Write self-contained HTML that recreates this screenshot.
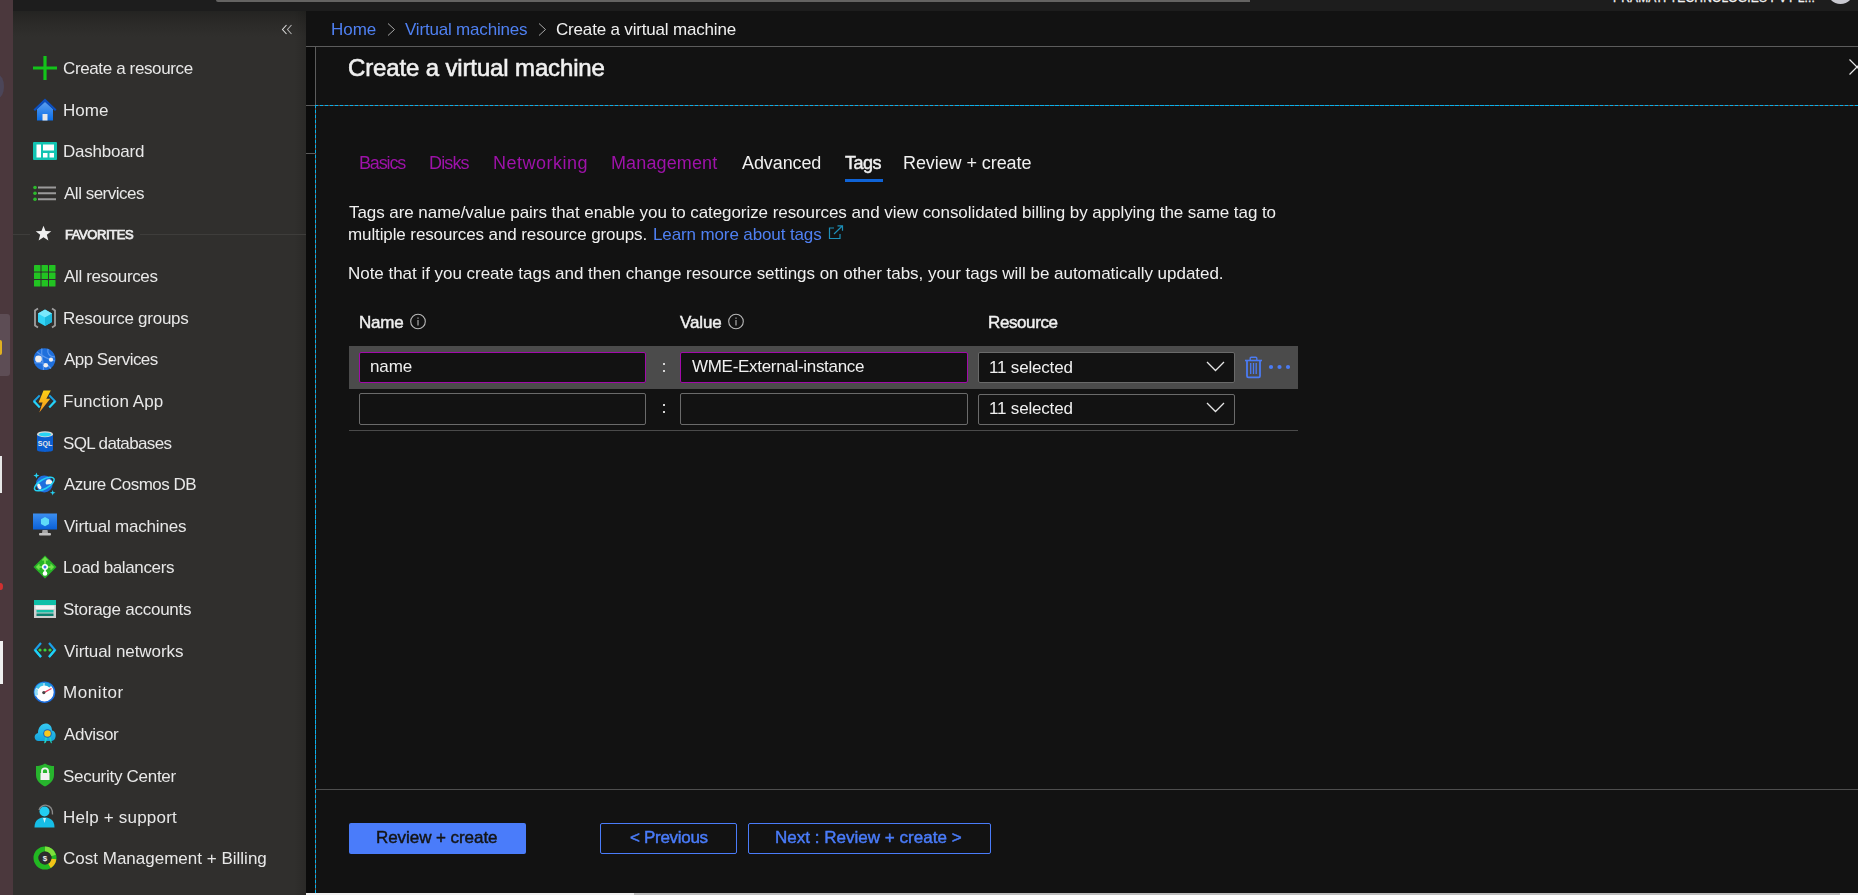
<!DOCTYPE html>
<html><head><meta charset="utf-8"><style>
*{margin:0;padding:0;box-sizing:border-box}
html,body{width:1858px;height:895px;overflow:hidden;background:#121212;font-family:"Liberation Sans", sans-serif;-webkit-font-smoothing:antialiased}
.t,.si,.fav{will-change:transform}
.a{position:absolute}
svg{display:block}
.strip{position:absolute;left:0;top:0;width:13px;height:895px;background:#4b383d}
.topbar{position:absolute;left:13px;top:0;width:1845px;height:11px;background:#1d1d1d}
.sidebar{position:absolute;left:13px;top:11px;width:293px;height:884px;background:linear-gradient(180deg,#242422 0px,#2b2a28 12px,#302f2d 26px)}
.sbshadow{position:absolute;left:294px;top:11px;width:12px;height:884px;background:linear-gradient(90deg,rgba(0,0,0,0),rgba(0,0,0,0.12))}
.ic{position:absolute;left:33px;width:24px;height:24px}
.ic svg{display:block}
.si{position:absolute;left:64px;font-size:17px;line-height:21px;color:#e8e8e8;white-space:nowrap;letter-spacing:-0.35px}
.fav{position:absolute;left:65px;font-size:13px;line-height:15px;font-weight:400;color:#ececec;letter-spacing:-0.42px;-webkit-text-stroke:0.75px #ececec}
.fav-line{position:absolute;left:13px;width:293px;height:1px;background:#3e3d3b}
.t{position:absolute;white-space:nowrap;font-size:17px;line-height:21px;color:#f0f0f0}
.lnk{color:#4f80f2}
.purple{color:#9e12a9}
.tab{top:152px;font-size:18px;line-height:22px}
.semi{-webkit-text-stroke:0.45px #f0f0f0}
</style></head><body>
<div class="strip"></div>
<div class="a" style="left:-8px;top:75px;width:12px;height:23px;border-radius:50%;background:#4b4558;filter:blur(0.6px)"></div>
<div class="a" style="left:-4px;top:314px;width:14px;height:62px;border-radius:3px;background:#5d4d55"></div>
<div class="a" style="left:-3px;top:340px;width:5px;height:15px;border-radius:2px;background:#e0b020"></div>
<div class="a" style="left:0;top:456px;width:2px;height:37px;background:#e8e8e8"></div>
<div class="a" style="left:-2px;top:583px;width:5px;height:7px;border-radius:50%;background:#d03030"></div>
<div class="a" style="left:0;top:641px;width:3px;height:43px;background:#f0f0f0"></div>
<div class="topbar"></div>
<div class="a" style="left:216px;top:0;width:1034px;height:2px;background:#646362;border-bottom-left-radius:2px"></div>
<div class="a" style="left:1613px;top:-9px;font-size:12px;line-height:15px;color:#f0f0f0;letter-spacing:0.16px;-webkit-text-stroke:0.3px #f0f0f0;white-space:nowrap">PRAMATI TECHNOLOGIES PVT L...</div>
<div class="a" style="left:1827px;top:-23.5px;width:27px;height:27px;border-radius:50%;background:#c9c9d0"></div>
<div class="sidebar"></div>
<div class="sbshadow"></div>
<div class="ic" style="top:56.0px"><svg width="24" height="24" viewBox="0 0 24 24"><path d="M12 0v24M0 12h24" stroke="#13c41a" stroke-width="3.2"/></svg></div><div class="si" style="top:58px;left:63.3px;letter-spacing:-0.369px">Create a resource</div><div class="ic" style="top:97.6px"><svg width="24" height="24" viewBox="0 0 24 24"><defs><linearGradient id="hg" x1="0" y1="0" x2="0" y2="1"><stop offset="0" stop-color="#5ea0ef"/><stop offset="1" stop-color="#0a6ee8"/></linearGradient></defs>
<path d="M4 11 L12 3.5 L20 11 V22.5 H4Z" fill="url(#hg)"/><path d="M0.5 11.5 L12 0.5 L23.5 11.5 L22 13 L12 4 L2 13Z" fill="#0c4fbf"/><rect x="9.5" y="16" width="5" height="6.5" fill="#e8e8e8"/></svg></div><div class="si" style="top:100px;left:63.3px;letter-spacing:0.067px">Home</div><div class="ic" style="top:139.2px"><svg width="24" height="24" viewBox="0 0 24 24"><rect x="0" y="3" width="24" height="18" rx="1" fill="#12c4b2"/><rect x="3.5" y="5.5" width="4.5" height="13" fill="#fff"/><rect x="10" y="5.5" width="11" height="6" fill="#fff"/><rect x="10" y="14" width="4.5" height="4.5" fill="#fff"/><rect x="16.5" y="14" width="4.5" height="4.5" fill="#fff"/></svg></div><div class="si" style="top:141px;left:63.3px;letter-spacing:-0.225px">Dashboard</div><div class="ic" style="top:180.7px"><svg width="24" height="24" viewBox="0 0 24 24"><g fill="#2dba2d"><circle cx="2" cy="6.5" r="1.8"/><circle cx="2" cy="12.3" r="1.8"/><circle cx="2" cy="18.2" r="1.8"/></g><g stroke="#9a9a9a" stroke-width="2"><path d="M5 6.5h18M5 12.3h18M5 18.2h18"/></g></svg></div><div class="si" style="top:183px;left:64.3px;letter-spacing:-0.491px">All services</div><div class="fav-line" style="top:234px;left:13px;width:17px"></div><div class="fav-line" style="top:234px;left:140px;width:166px"></div><div style="position:absolute;left:35px;top:225px;width:17px;height:17px"><svg width="17" height="17" viewBox="0 0 24 24"><path d="M12 1 L14.9 8.6 L23 8.9 L16.7 13.9 L18.9 21.8 L12 17.3 L5.1 21.8 L7.3 13.9 L1 8.9 L9.1 8.6Z" fill="#f0f0f0"/></svg></div><div class="fav" style="top:227px;left:64.6px">FAVORITES</div><div class="ic" style="top:263.9px"><svg width="24" height="24" viewBox="0 0 24 24"><g fill="#22c322"><rect x="1.0" y="1.0" width="6.5" height="6.5" rx="0.6"/><rect x="8.5" y="1.0" width="6.5" height="6.5" rx="0.6"/><rect x="16.0" y="1.0" width="6.5" height="6.5" rx="0.6"/><rect x="1.0" y="8.5" width="6.5" height="6.5" rx="0.6"/><rect x="8.5" y="8.5" width="6.5" height="6.5" rx="0.6"/><rect x="16.0" y="8.5" width="6.5" height="6.5" rx="0.6"/><rect x="1.0" y="16.0" width="6.5" height="6.5" rx="0.6"/><rect x="8.5" y="16.0" width="6.5" height="6.5" rx="0.6"/><rect x="16.0" y="16.0" width="6.5" height="6.5" rx="0.6"/></g></svg></div><div class="si" style="top:266px;left:64.3px;letter-spacing:-0.358px">All resources</div><div class="ic" style="top:305.5px"><svg width="24" height="24" viewBox="0 0 24 24"><path d="M5 2.5 L2 4.5 V19.5 L5 21.5" fill="none" stroke="#a0a0a0" stroke-width="1.8"/><path d="M19 2.5 L22 4.5 V19.5 L19 21.5" fill="none" stroke="#a0a0a0" stroke-width="1.8"/>
<path d="M12 3.5 L19 7.5 V16 L12 20 L5 16 V7.5Z" fill="#32d4f5"/><path d="M12 3.5 L19 7.5 L12 11.5 L5 7.5Z" fill="#7ae8fb"/><path d="M12 11.5 L19 7.5 V16 L12 20Z" fill="#1cb8dc"/></svg></div><div class="si" style="top:308px;left:63.3px;letter-spacing:-0.264px">Resource groups</div><div class="ic" style="top:347.1px"><svg width="24" height="24" viewBox="0 0 24 24"><circle cx="11.5" cy="12.2" r="10.9" fill="#1e6fdc"/><path d="M4 5 C9 9 14 12 22 14 M9 1.5 C7.5 8 11 16 10.5 23 M1.5 16 C8 15 14 17 18 21.5 M15 1.8 C14 6 16 10 22 10" stroke="#5a98ee" stroke-width="1.2" fill="none"/><circle cx="5.5" cy="11.9" r="3.4" fill="#f0f0f0"/><circle cx="18" cy="12.7" r="2.1" fill="#f0f0f0"/><circle cx="12.8" cy="18.3" r="2.3" fill="#f0f0f0"/></svg></div><div class="si" style="top:349px;left:64.3px;letter-spacing:-0.536px">App Services</div><div class="ic" style="top:388.6px"><svg width="24" height="24" viewBox="0 0 24 24"><defs><linearGradient id="fg" x1="0" y1="0" x2="0" y2="1"><stop offset="0" stop-color="#fcd116"/><stop offset="1" stop-color="#f7941d"/></linearGradient></defs><path d="M6.7 6.4 L0.9 12.2 L6.7 18.4" fill="none" stroke="#1ba1e2" stroke-width="2"/><path d="M16.3 6.4 L22.1 12.2 L16.3 18.4" fill="none" stroke="#1ba1e2" stroke-width="2"/><path d="M0.9 12.2 L6.7 18.4 M22.1 12.2 L16.3 18.4" stroke="#27d4f5" stroke-width="2"/><path d="M10.5 1.5 L17.8 1.5 L13.3 9.8 L17.2 9.8 L6.3 23.5 L9.6 13.6 L5.6 13.6 Z" fill="url(#fg)"/></svg></div><div class="si" style="top:391px;left:63.3px;letter-spacing:0.091px">Function App</div><div class="ic" style="top:430.2px"><svg width="24" height="24" viewBox="0 0 24 24"><path d="M4 4 V20 C4 22.5 20 22.5 20 20 V4Z" fill="#0b5ed0"/><ellipse cx="12" cy="4.2" rx="8" ry="3" fill="#d8d8d8"/><ellipse cx="12" cy="4.4" rx="6.3" ry="2" fill="#26d4f5"/><text x="12" y="15.5" font-family="Liberation Sans" font-size="7" font-weight="700" fill="#e8e8e8" text-anchor="middle">SQL</text></svg></div><div class="si" style="top:433px;left:63.3px;letter-spacing:-0.625px">SQL databases</div><div class="ic" style="top:471.8px"><svg width="24" height="24" viewBox="0 0 24 24"><circle cx="11.3" cy="12" r="8.4" fill="#1f6fde"/><path d="M13 9.5 C13.5 7 17 6.5 18 8.5 C19.5 8.5 19.8 11 18.5 12 L13.5 12.5 C12.5 12 12.5 10.5 13 9.5Z" fill="#f2f2f2"/><path d="M4 11.5 C5.5 11 7.5 12 7.5 14 C9 14.5 8.5 17.5 7 17.5 C5.5 17 4 15 4 11.5Z" fill="#f2f2f2"/><ellipse cx="11.3" cy="12" rx="11" ry="4.6" transform="rotate(-30 11.3 12)" fill="none" stroke="#24d2f4" stroke-width="1.5"/><path d="M3.4 0.6 L4.2 2.8 L6.4 3.6 L4.2 4.4 L3.4 6.6 L2.6 4.4 L0.4 3.6 L2.6 2.8Z" fill="#24d2f4"/><path d="M19.7 18 L20.4 20.1 L22.5 20.8 L20.4 21.5 L19.7 23.6 L19 21.5 L16.9 20.8 L19 20.1Z" fill="#24d2f4"/></svg></div><div class="si" style="top:474px;left:64.3px;letter-spacing:-0.521px">Azure Cosmos DB</div><div class="ic" style="top:513.4px"><svg width="24" height="24" viewBox="0 0 24 24"><defs><linearGradient id="vg" x1="0" y1="0" x2="0" y2="1"><stop offset="0" stop-color="#3c8ff0"/><stop offset="1" stop-color="#0a60d8"/></linearGradient></defs><rect x="0" y="0.5" width="24" height="16" fill="url(#vg)"/><path d="M12 4 L16 6.3 V11 L12 13.3 L8 11 V6.3Z" fill="#5fdaf8"/><path d="M9.5 17 H14.5 L15 20 H9Z" fill="#a8a8a8"/><rect x="6" y="20" width="12" height="2.5" rx="1" fill="#c0c0c0"/></svg></div><div class="si" style="top:516px;left:64.3px;letter-spacing:-0.193px">Virtual machines</div><div class="ic" style="top:555.0px"><svg width="24" height="24" viewBox="0 0 24 24"><path d="M12 0.5 L23.5 12 L12 23.5 L0.5 12Z" fill="#27b327"/><path d="M12 3 V10 M4 12 H20" stroke="#6fe04a" stroke-width="2"/><path d="M9.5 5.5 L12 3 L14.5 5.5 M6.5 9.5 L4 12 L6.5 14.5 M17.5 9.5 L20 12 L17.5 14.5" fill="none" stroke="#6fe04a" stroke-width="1.6"/><circle cx="12" cy="12" r="3" fill="#fff"/><circle cx="12" cy="12" r="1.5" fill="#3a7de8"/><path d="M12 14 V17" stroke="#fff" stroke-width="1.6"/><circle cx="12" cy="18.5" r="2.3" fill="#fff"/></svg></div><div class="si" style="top:557px;left:63.3px;letter-spacing:-0.369px">Load balancers</div><div class="ic" style="top:596.5px"><svg width="24" height="24" viewBox="0 0 24 24"><rect x="1" y="3" width="22" height="18" fill="#cfcfcf"/><rect x="1" y="3" width="22" height="5" fill="#0fc0a8"/><rect x="2.5" y="8.5" width="19" height="3.5" fill="#f4f4f4"/><rect x="3.5" y="13" width="17" height="2.5" fill="#14bfa6"/><rect x="3.5" y="16.5" width="17" height="2.5" fill="#0c7f70"/></svg></div><div class="si" style="top:599px;left:63.3px;letter-spacing:-0.253px">Storage accounts</div><div class="ic" style="top:638.1px"><svg width="24" height="24" viewBox="0 0 24 24"><path d="M8 5 L2 12 L8 19" fill="none" stroke="#1aa0ea" stroke-width="2.2"/><path d="M16 5 L22 12 L16 19" fill="none" stroke="#1aa0ea" stroke-width="2.2"/><path d="M2 12 L8 19 M22 12 L16 19" stroke="#1ed4f6" stroke-width="2.2"/><g fill="#3bd23b"><circle cx="7" cy="12" r="1.6"/><circle cx="12" cy="12" r="1.6"/><circle cx="17" cy="12" r="1.6"/></g></svg></div><div class="si" style="top:641px;left:64.3px;letter-spacing:-0.08px">Virtual networks</div><div class="ic" style="top:679.7px"><svg width="24" height="24" viewBox="0 0 24 24"><circle cx="11.5" cy="12.2" r="10" fill="#fdfdfd" stroke="#1a6ee0" stroke-width="1.6"/><path d="M3.6 15.5 A8.3 8.3 0 0 1 3.6 9" fill="none" stroke="#8fdcf5" stroke-width="3.2"/><path d="M4 8.3 A8.3 8.3 0 0 1 10.5 4" fill="none" stroke="#3cc0ea" stroke-width="3.2"/><path d="M11.5 3.9 A8.3 8.3 0 0 1 17.5 6.5" fill="none" stroke="#22a9dc" stroke-width="3.2"/><path d="M11 12.6 L18.5 8.5" stroke="#e83a5e" stroke-width="1.3"/><circle cx="10.8" cy="12.6" r="1.6" fill="#444"/></svg></div><div class="si" style="top:682px;left:63.3px;letter-spacing:0.583px">Monitor</div><div class="ic" style="top:721.3px"><svg width="24" height="24" viewBox="0 0 24 24"><defs><linearGradient id="ag" x1="0" y1="0" x2="0" y2="1"><stop offset="0" stop-color="#36c8f0"/><stop offset="1" stop-color="#14a4dc"/></linearGradient></defs><path d="M5.5 20 C1 20 0 13 5 12 C5 6 9 2 13.5 2.5 C17.5 3 19 6.5 19 9.5 C22.5 10 23.5 14.5 22 17.5 C21.3 19 20 20 18.5 20Z" fill="url(#ag)"/><path d="M12.5 15.5 L11 22.5 L13 21.5 L14.5 16 M16 16 L17.5 21.5 L19 22.5 L17.5 15.5" fill="#1ed3c4"/><circle cx="14.5" cy="12.5" r="4.3" fill="#1d5fb8"/><circle cx="14.5" cy="12.5" r="3.3" fill="#f8c81c"/></svg></div><div class="si" style="top:724px;left:64.3px;letter-spacing:-0.333px">Advisor</div><div class="ic" style="top:762.9px"><svg width="24" height="24" viewBox="0 0 24 24"><path d="M12 0.5 C15 2.5 18.5 3 21 3 V12 C21 18 16 21.5 12 23.5 C8 21.5 3 18 3 12 V3 C5.5 3 9 2.5 12 0.5Z" fill="#27b52d"/><rect x="7.5" y="10" width="9" height="7" fill="#f2f2f2"/><path d="M9 10 V8 C9 4.5 15 4.5 15 8 V10" fill="none" stroke="#f2f2f2" stroke-width="1.8"/></svg></div><div class="si" style="top:766px;left:63.3px;letter-spacing:-0.286px">Security Center</div><div class="ic" style="top:804.4px"><svg width="24" height="24" viewBox="0 0 24 24"><path d="M6 6 C8 -1 20 -1 19.5 10.5" fill="none" stroke="#8a8a8a" stroke-width="1.3"/><circle cx="11.5" cy="7.5" r="5" fill="#22cdf2"/><path d="M1.5 23.5 C1.5 16 6 13.5 11.5 13.5 C17 13.5 21.5 16 21.5 23.5Z" fill="#16bde6"/><path d="M10 14 L11.5 19 L13 14Z" fill="#cdf3fb"/></svg></div><div class="si" style="top:807px;left:63.3px;letter-spacing:0.208px">Help + support</div><div class="ic" style="top:846.0px"><svg width="24" height="24" viewBox="0 0 24 24"><circle cx="12" cy="12" r="9" fill="none" stroke="#22b822" stroke-width="5"/><path d="M12 3 A9 9 0 0 1 20.5 9.5" fill="none" stroke="#7ede3c" stroke-width="5"/><path d="M20.8 13 A9 9 0 0 1 16.5 19.8" fill="none" stroke="#f2c318" stroke-width="5"/><circle cx="12" cy="12" r="6.5" fill="#2d2d2d"/><text x="12" y="15" font-family="Liberation Sans" font-size="8" font-weight="700" fill="#eee" text-anchor="middle">$</text></svg></div><div class="si" style="top:848px;left:63.3px;letter-spacing:0.008px">Cost Management + Billing</div>
<!-- collapse chevrons -->
<div class="a" style="left:281px;top:24px"><svg width="12" height="11" viewBox="0 0 12 11"><path d="M5.5 1 L1.5 5.5 L5.5 10" fill="none" stroke="#dadada" stroke-width="1.1"/><path d="M10.5 1 L6.5 5.5 L10.5 10" fill="none" stroke="#b0b0b0" stroke-width="1.1"/></svg></div>

<!-- main -->
<div class="a" style="left:306px;top:11px;width:1552px;height:884px;background:#121212"></div>
<div class="a" style="left:306px;top:47px;width:9px;height:848px;background:#0b0b0b"></div>
<div class="a" style="left:306px;top:46px;width:1552px;height:1px;background:#5c5c5c"></div>
<div class="a" style="left:315px;top:46px;width:1px;height:60px;background:#5c5c5c"></div>
<div class="a" style="left:306px;top:105px;width:10px;height:1px;background:#5c5c5c"></div>
<div class="a" style="left:306px;top:153px;width:9px;height:1px;background:#5c5c5c"></div>

<!-- breadcrumb -->
<div class="t lnk" style="left:330.85px;top:19px;letter-spacing:-0.03px">Home</div>
<div class="a" style="left:387px;top:23px"><svg width="9" height="13" viewBox="0 0 9 13"><path d="M1 0.5 L7.5 6.5 L1 12.5" fill="none" stroke="#a8a8a8" stroke-width="1"/></svg></div>
<div class="t lnk" style="left:405.45px;top:19px;letter-spacing:-0.19px">Virtual machines</div>
<div class="a" style="left:538px;top:23px"><svg width="9" height="13" viewBox="0 0 9 13"><path d="M1 0.5 L7.5 6.5 L1 12.5" fill="none" stroke="#a8a8a8" stroke-width="1"/></svg></div>
<div class="t" style="left:556.05px;top:19px;letter-spacing:-0.18px">Create a virtual machine</div>

<!-- title -->
<div class="t semi" style="left:348.45px;top:54px;font-size:24px;line-height:28px;letter-spacing:-0.14px;-webkit-text-stroke-width:0.6px">Create a virtual machine</div>
<!-- close X -->
<div class="a" style="left:1849px;top:59px"><svg width="16" height="16" viewBox="0 0 16 16"><path d="M0.5 0.5 L15.5 15.5 M15.5 0.5 L0.5 15.5" stroke="#e8e8e8" stroke-width="1.2"/></svg></div>

<!-- dashed focus outline -->
<div class="a" style="left:315px;top:105px;width:1543px;height:1px;background:repeating-linear-gradient(90deg,#08b0ec 0 3.5px,#66574f 3.5px 5px)"></div>
<div class="a" style="left:315px;top:105px;width:1px;height:790px;background:repeating-linear-gradient(180deg,#08b0ec 0 3.5px,#66574f 3.5px 5px)"></div>

<!-- tabs -->
<div class="t tab purple" style="left:359.05px;letter-spacing:-1.16px">Basics</div>
<div class="t tab purple" style="left:429.35px;letter-spacing:-0.85px">Disks</div>
<div class="t tab purple" style="left:492.55px;letter-spacing:0.51px">Networking</div>
<div class="t tab purple" style="left:611.25px;letter-spacing:0.13px">Management</div>
<div class="t tab" style="left:741.95px;letter-spacing:-0.1px">Advanced</div>
<div class="t tab semi" style="left:845.35px;letter-spacing:-0.5px">Tags</div>
<div class="t tab" style="left:902.95px;letter-spacing:-0.08px">Review + create</div>
<div class="a" style="left:845px;top:179px;width:38px;height:3px;background:#0f63d6"></div>

<!-- description -->
<div class="t" style="left:349.15px;top:202px;letter-spacing:-0.062px">Tags are name/value pairs that enable you to categorize resources and view consolidated billing by applying the same tag to</div>
<div class="t" style="left:348.15px;top:224px;letter-spacing:-0.108px">multiple resources and resource groups.</div>
<div class="t lnk" style="left:653.15px;top:224px;letter-spacing:-0.12px">Learn more about tags</div>
<div class="a" style="left:828px;top:225px"><svg width="16" height="15" viewBox="0 0 16 15"><path d="M6 3 H1.5 V13.5 H12 V9" fill="none" stroke="#1d8fb8" stroke-width="1.2"/><path d="M6 9 L14.5 0.8 M9.5 0.8 H14.5 V5.8" fill="none" stroke="#1d8fb8" stroke-width="1.2"/></svg></div>
<div class="t" style="left:348.15px;top:263px;letter-spacing:-0.028px">Note that if you create tags and then change resource settings on other tabs, your tags will be automatically updated.</div>

<!-- table header -->
<div class="t semi" style="left:359.25px;top:312px;letter-spacing:-0.2px">Name</div>
<div class="a" style="left:410px;top:313px"><svg width="16" height="17" viewBox="0 0 16 17"><circle cx="8" cy="8.5" r="7.3" fill="none" stroke="#b8b8b8" stroke-width="1.1"/><rect x="7.4" y="7" width="1.2" height="5.5" fill="#aaa"/><rect x="7.4" y="4.5" width="1.2" height="1.3" fill="#aaa"/></svg></div>
<div class="t semi" style="left:680.25px;top:312px;letter-spacing:-0.1px">Value</div>
<div class="a" style="left:728px;top:313px"><svg width="16" height="17" viewBox="0 0 16 17"><circle cx="8" cy="8.5" r="7.3" fill="none" stroke="#b8b8b8" stroke-width="1.1"/><rect x="7.4" y="7" width="1.2" height="5.5" fill="#aaa"/><rect x="7.4" y="4.5" width="1.2" height="1.3" fill="#aaa"/></svg></div>
<div class="t semi" style="left:987.85px;top:312px;letter-spacing:-0.4px">Resource</div>

<!-- row 1 highlight -->
<div class="a" style="left:349px;top:346px;width:949px;height:43px;background:#4b4b4b"></div>
<div class="a" style="left:359px;top:352px;width:287px;height:31px;background:#121212;border:1.5px solid #a20aaa;border-radius:2px"></div>
<div class="t" style="left:369.95px;top:356px;letter-spacing:-0.13px">name</div>
<div class="a" style="left:663px;top:363px;width:2px;height:2px;background:#d4d4d4"></div>
<div class="a" style="left:663px;top:370px;width:2px;height:2px;background:#d4d4d4"></div>
<div class="a" style="left:680px;top:352px;width:288px;height:31px;background:#121212;border:1.5px solid #a20aaa;border-radius:2px"></div>
<div class="t" style="left:691.95px;top:356px;letter-spacing:-0.305px">WME-External-instance</div>
<div class="a" style="left:978px;top:352px;width:257px;height:31px;background:#121212;border:1px solid #6a6a6a;border-radius:2px"></div>
<div class="t" style="left:989.15px;top:357px;letter-spacing:-0.18px">11 selected</div>
<div class="a" style="left:1206px;top:361px"><svg width="19" height="11" viewBox="0 0 19 11"><path d="M1 1 L9.5 9.5 L18 1" fill="none" stroke="#e6e6e6" stroke-width="1.3"/></svg></div>
<div class="a" style="left:1244px;top:356px"><svg width="19" height="23" viewBox="0 0 19 23"><g fill="none" stroke="#4b7bf2"><path d="M1 4.5 H18" stroke-width="1.6"/><path d="M6.2 4.5 V2.3 Q6.2 1.2 7.3 1.2 H11.7 Q12.8 1.2 12.8 2.3 V4.5" stroke-width="1.4"/><path d="M3 5 V20 Q3 21.3 4.3 21.3 H14.7 Q16 21.3 16 20 V5" stroke-width="1.8"/><path d="M6.7 7 V18 M9.5 7 V18 M12.2 7 V18" stroke-width="1.3"/></g></svg></div>
<div class="a" style="left:1266px;top:362px"><svg width="27" height="10" viewBox="0 0 27 10"><g fill="#4b7bf2"><circle cx="5" cy="5" r="2.1"/><circle cx="13.5" cy="5" r="2.1"/><circle cx="22" cy="5" r="2.1"/></g></svg></div>

<!-- row 2 -->
<div class="a" style="left:359px;top:393px;width:287px;height:32px;background:#121212;border:1px solid #6a6a6a;border-radius:2px"></div>
<div class="a" style="left:663px;top:404px;width:2px;height:2px;background:#d4d4d4"></div>
<div class="a" style="left:663px;top:411px;width:2px;height:2px;background:#d4d4d4"></div>
<div class="a" style="left:680px;top:393px;width:288px;height:32px;background:#121212;border:1px solid #6a6a6a;border-radius:2px"></div>
<div class="a" style="left:978px;top:394px;width:257px;height:31px;background:#121212;border:1px solid #6a6a6a;border-radius:2px"></div>
<div class="t" style="left:989.15px;top:398px;letter-spacing:-0.18px">11 selected</div>
<div class="a" style="left:1206px;top:402px"><svg width="19" height="11" viewBox="0 0 19 11"><path d="M1 1 L9.5 9.5 L18 1" fill="none" stroke="#e6e6e6" stroke-width="1.3"/></svg></div>
<div class="a" style="left:349px;top:430px;width:949px;height:1px;background:#4a4a4a"></div>

<!-- footer -->
<div class="a" style="left:316px;top:789px;width:1542px;height:1px;background:#4e4e4e"></div>
<div class="a" style="left:349px;top:823px;width:177px;height:31px;background:#4a7cfa;border-radius:2px"></div>
<div class="t semi" style="left:375.85px;top:827px;color:#141414;-webkit-text-stroke-color:#141414;letter-spacing:-0.06px">Review + create</div>
<div class="a" style="left:600px;top:823px;width:137px;height:31px;border:1px solid #4a7cfa;border-radius:2px"></div>
<div class="t semi" style="left:629.75px;top:827px;color:#4a7cfa;-webkit-text-stroke-color:#4a7cfa;letter-spacing:-0.3px">&lt; Previous</div>
<div class="a" style="left:748px;top:823px;width:243px;height:31px;border:1px solid #4a7cfa;border-radius:2px"></div>
<div class="t semi" style="left:775.05px;top:827px;color:#4a7cfa;-webkit-text-stroke-color:#4a7cfa;letter-spacing:0.02px">Next : Review + create &gt;</div>

<!-- bottom scrollbar -->
<div class="a" style="left:306px;top:893px;width:1552px;height:2px;background:#efefef"></div>
<div class="a" style="left:634px;top:893px;width:1206px;height:2px;background:#bdbdbd"></div>
</body></html>
